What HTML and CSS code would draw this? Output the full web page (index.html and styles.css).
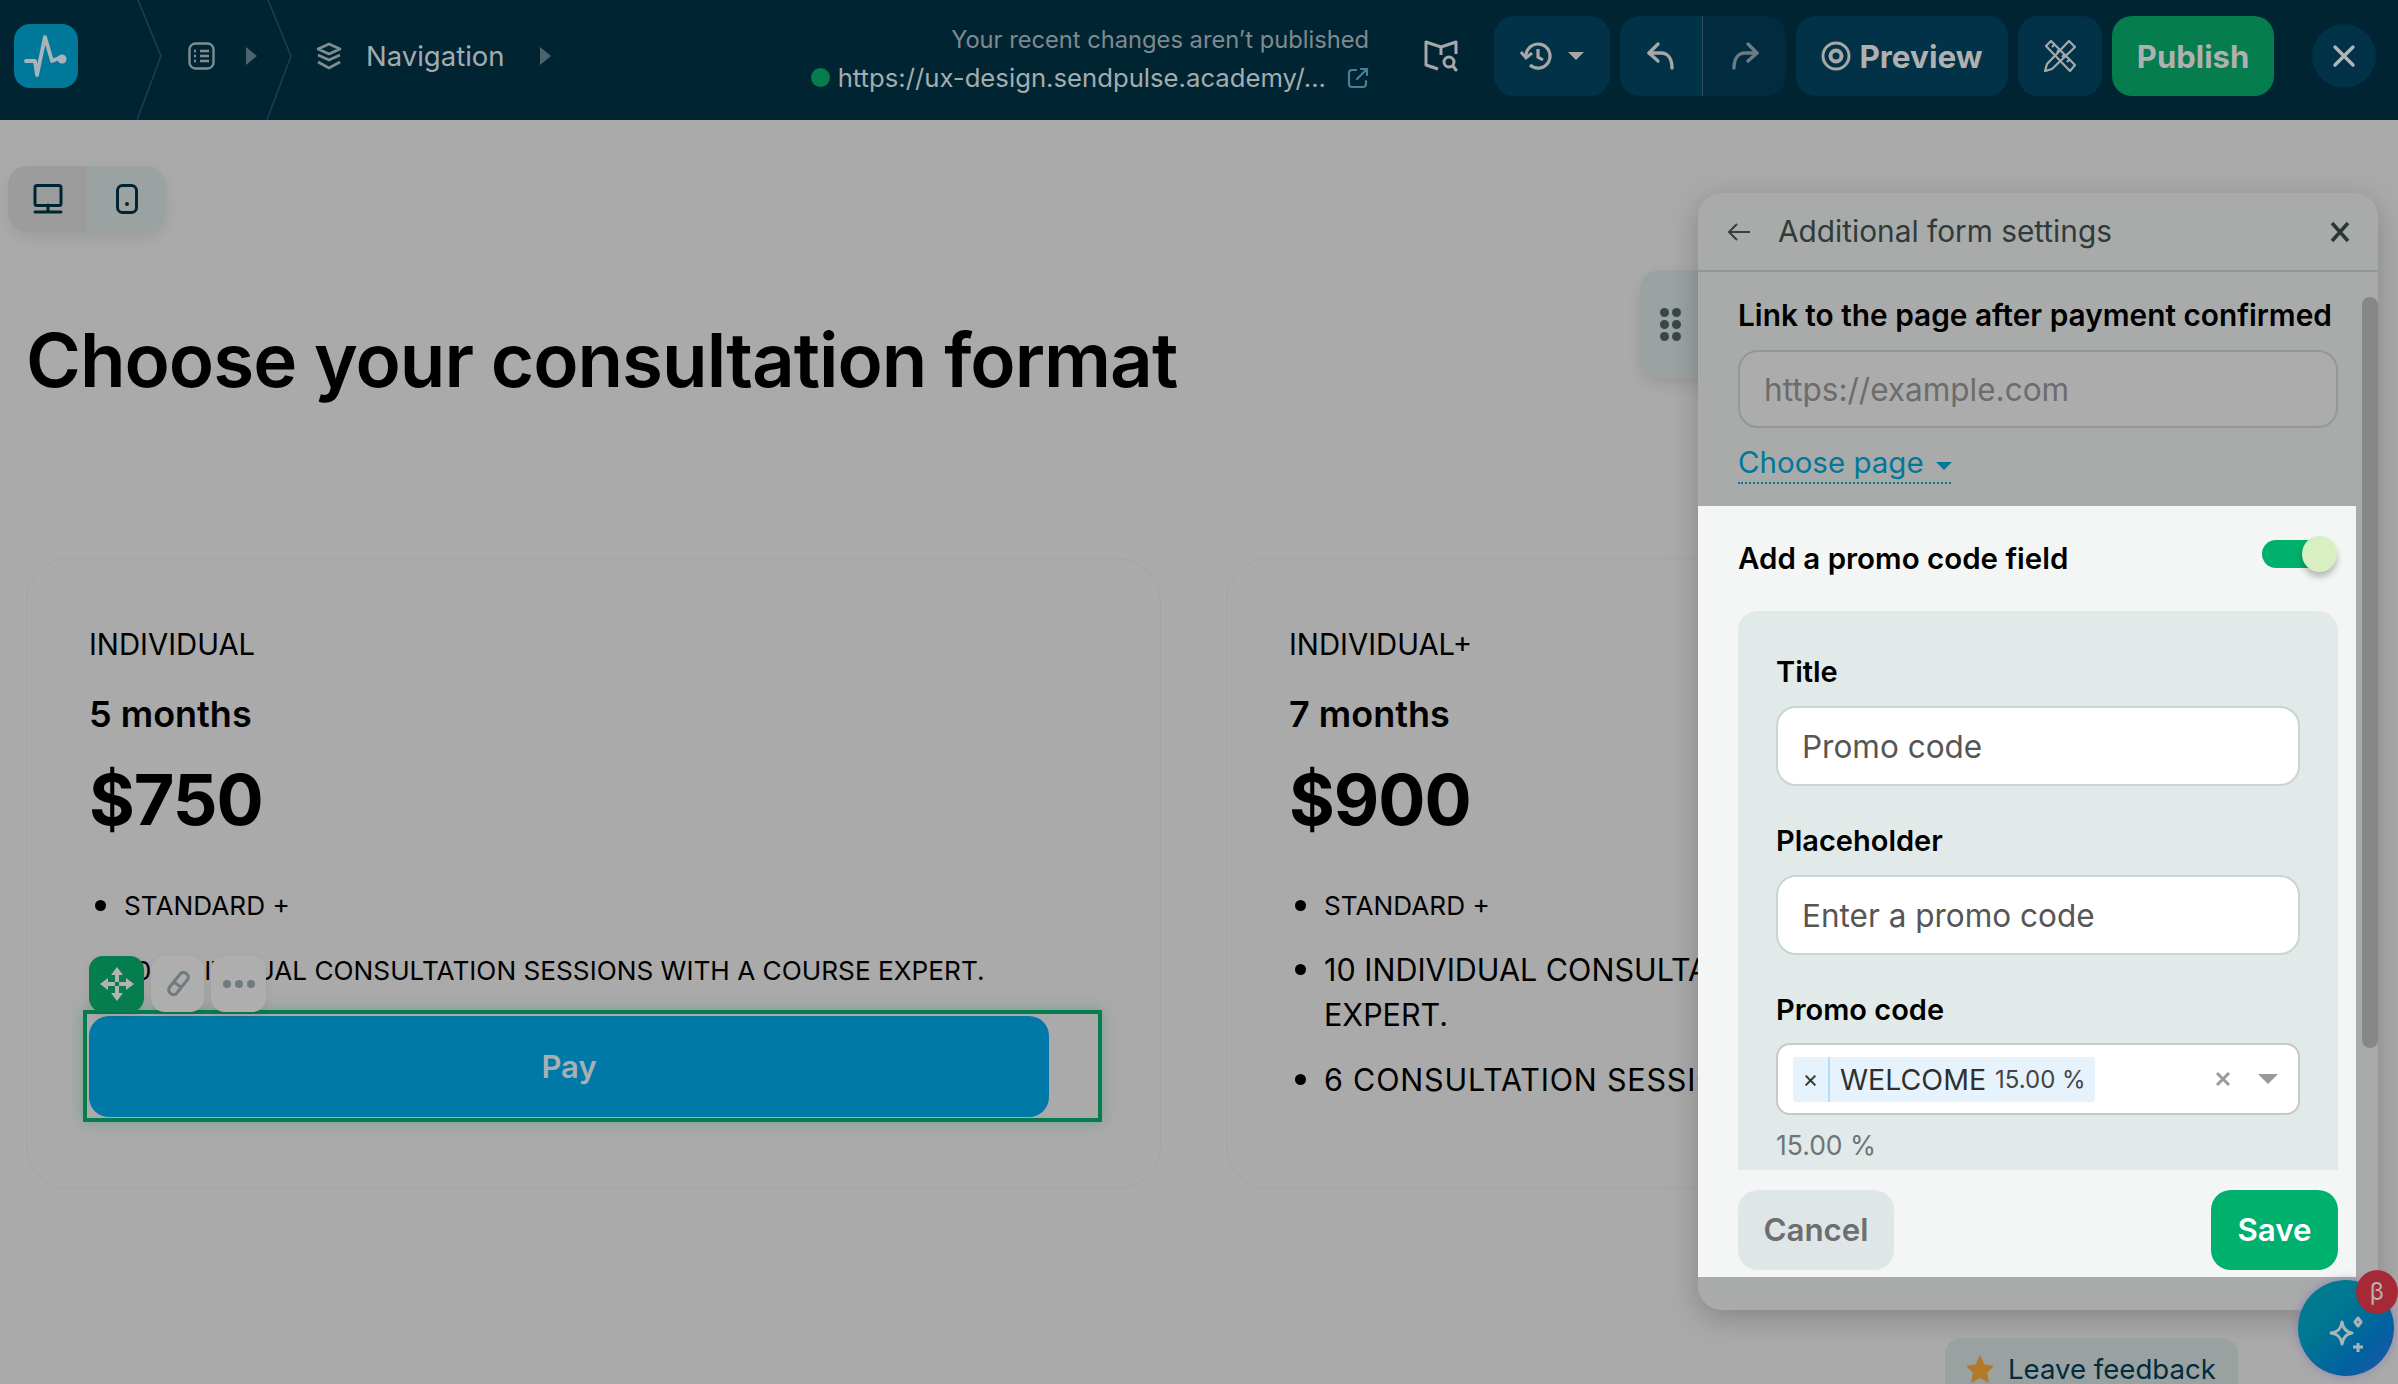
FILE: index.html
```html
<!DOCTYPE html>
<html lang="en">
<head>
  <meta charset="UTF-8">
  <title>Choose your consultation format</title>
  <link rel="stylesheet" href="styles.css">
</head>
<body>
  <!-- Top bar -->
  <header class="topbar">
    <div class="logo">
      <svg width="44" height="42" viewBox="0 0 44 42" fill="none" stroke="#a9b4b8" stroke-width="3.8" stroke-linejoin="round" stroke-linecap="round"><path d="M2 26h9l2 14 8-38 7 24 7-3"/><circle cx="38" cy="24" r="4.500" fill="#a9b4b8" stroke="none"/></svg>
    </div>
    <svg class="chevron first" width="26" height="120" viewBox="0 0 26 120" fill="none" stroke="#1b4150" stroke-width="1.5"><path d="M1 0l23 56-24 64"/></svg>
    <svg class="form-icon" width="27" height="28" viewBox="0 0 27 28" fill="none" stroke="#7f8e94" stroke-width="2.4"><rect x="1.5" y="1.5" width="24" height="25" rx="6"/><path d="M12 9h9M12 14h9M12 19h9M6 9h2M6 14h2M6 19h2"/></svg>
    <span class="crumb-arrow"></span>
    <svg class="chevron second" width="26" height="120" viewBox="0 0 26 120" fill="none" stroke="#1b4150" stroke-width="1.5"><path d="M1 0l23 56-24 64"/></svg>
    <svg class="layers-icon" width="28" height="28" viewBox="0 0 28 28" fill="none" stroke="#7f8e94" stroke-width="2.6" stroke-linejoin="round"><path d="M14 2l11 5-11 5L3 7z"/><path d="M3 13l11 5 11-5M3 20l11 6 11-6"/></svg>
    <span class="crumb-text">Navigation</span>
    <span class="crumb-arrow"></span>

    <div class="status">
      <div class="status-note">Your recent changes aren’t published</div>
      <div class="status-url">
        <span class="status-dot"></span>
        <span>https://ux-design.sendpulse.academy/...</span>
        <svg width="22" height="22" viewBox="0 0 22 22" fill="none" stroke="#4a7f97" stroke-width="2.2" stroke-linecap="round"><path d="M9 3H5a3 3 0 0 0-3 3v11a3 3 0 0 0 3 3h11a3 3 0 0 0 3-3v-3M10 12L20 2M14 2h6v6"/></svg>
      </div>
    </div>

    <svg class="map-icon" width="34" height="34" viewBox="0 0 34 34" fill="none" stroke="#a8a8a8" stroke-width="3" stroke-linejoin="round"><path d="M14 30L2 26V3l15 5 15-5v12M17 8v8M10 28H6"/><circle cx="25" cy="23" r="5"/><path d="M29 27l3 4" stroke-linecap="round"/></svg>

    <button class="bar-btn history">
      <svg width="34" height="30" viewBox="0 0 34 30" fill="none" stroke="#a8a8a8" stroke-width="3.2"><path d="M6 15a12 12 0 1 1 4 9"/><path d="M1 11l5 6 6-5" stroke-width="3"/><path d="M18 8v8l5 3"/></svg>
      <span class="caret"></span>
    </button>

    <div class="undo-group">
      <button class="bar-btn undo">
        <svg width="30" height="30" viewBox="0 0 30 30" fill="none" stroke="#a8a8a8" stroke-width="3.4" stroke-linecap="round" stroke-linejoin="round"><path d="M12 3L3 12l9 8"/><path d="M3 12h12c7 0 11 6 11 15"/></svg>
      </button>
      <button class="bar-btn redo">
        <svg width="30" height="30" viewBox="0 0 30 30" fill="none" stroke="#6b7c83" stroke-width="3.4" stroke-linecap="round" stroke-linejoin="round"><path d="M18 3l9 9-9 8"/><path d="M27 12H15C8 12 4 18 4 27"/></svg>
      </button>
    </div>

    <button class="bar-btn preview">
      <svg width="30" height="30" viewBox="0 0 30 30" fill="none" stroke="#a8a8a8"><circle cx="15" cy="15" r="13" stroke-width="3"/><circle cx="15" cy="15" r="5.500" stroke-width="4"/></svg>
      <span>Preview</span>
    </button>

    <button class="bar-btn tools">
      <svg width="32" height="32" viewBox="0 0 32 32" fill="none" stroke="#a8a8a8" stroke-width="2.2" stroke-linejoin="round"><path d="M2 6l5-5 24 24-5 6z"/><path d="M8 7l3-3M13 12l3-3M18 17l3-3M23 22l3-3"/><path d="M25 1l6 6L8 29l-7 2 2-7z"/></svg>
    </button>

    <button class="bar-btn publish">Publish</button>

    <button class="bar-close">
      <svg width="24" height="24" viewBox="0 0 24 24" fill="none" stroke="#b5b5b5" stroke-width="3.4" stroke-linecap="round"><path d="M3 3l18 18M21 3L3 21"/></svg>
    </button>
  </header>

  <!-- Page canvas -->
  <main class="canvas">
    <div class="device-switch">
      <div class="device active">
        <svg width="30" height="30" viewBox="0 0 30 30" fill="none" stroke="#012433" stroke-width="3"><rect x="2" y="1.5" width="26" height="20" rx="2"/><path d="M15 21v6M2 28h26" stroke-linecap="round"/></svg>
      </div>
      <div class="device">
        <svg width="22" height="30" viewBox="0 0 22 30" fill="none" stroke="#012433" stroke-width="3"><rect x="1.5" y="1.5" width="19" height="27" rx="5"/><circle cx="11" cy="20" r="2" fill="#012433" stroke="none"/></svg>
      </div>
    </div>

    <h1 class="page-title">Choose your consultation format</h1>

    <section class="plans">
      <article class="plan">
        <div class="plan-name">INDIVIDUAL</div>
        <div class="plan-term">5 months</div>
        <div class="plan-price">$750</div>
        <ul class="plan-list">
          <li>STANDARD +</li>
          <li>10 INDIVIDUAL CONSULTATION SESSIONS WITH A COURSE EXPERT.</li>
        </ul>
        <div class="pay-wrap">
          <div class="block-tools">
            <span class="tool tool-move">
              <svg width="36" height="36" viewBox="0 0 36 36" fill="#b3b3b3"><path d="M18 1l6 8h-4v7h-4V9h-4zM18 35l-6-8h4v-7h4v7h4zM1 18l8-6v4h7v4H9v4zM35 18l-8 6v-4h-7v-4h7v-4z"/></svg>
            </span>
            <span class="tool tool-link">
              <svg width="30" height="30" viewBox="0 0 30 30" fill="none" stroke="#6f7b7e" stroke-width="3"><path d="M6 19L18 4a5 5 0 0 1 7 6L13 25a5 5 0 0 1-7-6zM11 13l8 6"/></svg>
            </span>
            <span class="tool tool-more"><i></i><i></i><i></i></span>
          </div>
          <button class="pay-btn">Pay</button>
        </div>
      </article>

      <article class="plan plan-wide">
        <div class="plan-name">INDIVIDUAL+</div>
        <div class="plan-term">7 months</div>
        <div class="plan-price">$900</div>
        <ul class="plan-list">
          <li>STANDARD +</li>
          <li class="big">10 INDIVIDUAL CONSULTATION SESSIONS WITH A COURSE<br>EXPERT.</li>
          <li class="big">6 CONSULTATION SESSIONS</li>
        </ul>
      </article>
    </section>
  </main>

  <!-- Settings panel over the canvas -->
  <div class="panel-grip">
    <i></i><i></i><i></i><i></i><i></i><i></i>
  </div>
  <aside class="panel">
    <div class="panel-head">
      <svg width="24" height="20" viewBox="0 0 24 20" fill="none" stroke="#33403f" stroke-width="2"><path d="M23 10H2M10 2l-8 8 8 8"/></svg>
      <span class="panel-title">Additional form settings</span>
      <svg class="panel-x" width="20" height="20" viewBox="0 0 20 20" fill="none" stroke="#2b3636" stroke-width="3.6"><path d="M2 1l16 18M18 1L2 19"/></svg>
    </div>

    <div class="panel-top">
      <div class="field-label">Link to the page after payment confirmed</div>
      <div class="text-input dim">https://example.com</div>
      <a class="choose-page">Choose page <span class="caret teal"></span></a>
    </div>

    <div class="panel-focus">
      <div class="toggle-row">
        <span class="field-label">Add a promo code field</span>
        <span class="toggle"><span class="toggle-knob"></span></span>
      </div>

      <div class="promo-box">
        <div class="field-label">Title</div>
        <div class="text-input">Promo code</div>
        <div class="field-label next">Placeholder</div>
        <div class="text-input">Enter a promo code</div>
        <div class="field-label next">Promo code</div>
        <div class="select-input">
          <span class="chip">
            <span class="chip-x">×</span>
            <span class="chip-name">WELCOME</span>
            <span class="chip-value">15.00 %</span>
          </span>
          <svg class="select-clear" width="16" height="16" viewBox="0 0 16 16" fill="none" stroke="#9a9a9a" stroke-width="3"><path d="M2 2l12 12M14 2L2 14"/></svg>
          <span class="select-arrow"></span>
        </div>
        <div class="promo-note">15.00 %</div>
      </div>

      <div class="panel-foot">
        <button class="foot-btn cancel">Cancel</button>
        <button class="foot-btn save">Save</button>
      </div>
    </div>

    <div class="panel-scroll"></div>
  </aside>

  <button class="feedback">
    <svg width="30" height="30" viewBox="0 0 30 30" fill="#b57728"><path d="M15 1l4.500 9.500 9.500 1.200-7 7 2 10.300-9-5-9 5 2-10.300-7-7 9.500-1.200z"/></svg>
    <span>Leave feedback</span>
  </button>

  <div class="ai-btn">
    <svg width="36" height="40" viewBox="0 0 36 40" fill="none" stroke="#aab4bb" stroke-width="3" stroke-linejoin="round"><path d="M14 6c1 7 4 10 10 11-6 1-9 4-10 11-1-7-4-10-11-11 7-1 10-4 11-11z"/><path d="M30 2l3 4-3 4-3-4zM30 27v9M25 31h10"/></svg>
    <span class="ai-badge">β</span>
  </div>
</body>
</html>
```

FILE: styles.css
```css
* {
  box-sizing: border-box;
}

html, body {
  margin: 0;
  height: 1384px;
  overflow: hidden;
}

body {
  position: relative;
  width: 2398px;
  font-family: Inter, "Noto Sans", sans-serif;
  background-color: #aaaaaa;
  color: #000;
}

button {
  font-family: inherit;
  border: none;
  cursor: pointer;
}

/* Top bar */
.topbar {
  display: flex;
  align-items: center;
  height: 120px;
  padding: 0 22px 8px 14px;
  background-color: #012433;
}

.logo {
  display: flex;
  align-items: center;
  justify-content: center;
  width: 64px;
  height: 64px;
  border-radius: 16px;
  background-color: #00789a;
}

.chevron {
  flex: none;
  margin-top: 8px;
}

.chevron.first {
  margin-left: 59px;
}

.chevron.second {
  margin-left: 10px;
}

.form-icon {
  margin-left: 25px;
}

.layers-icon {
  margin-left: 22px;
}

.crumb-arrow {
  width: 0;
  height: 0;
  margin-left: 31px;
  border-left: 11px solid #4c646d;
  border-top: 9px solid transparent;
  border-bottom: 9px solid transparent;
}

.crumb-text {
  margin-left: 23px;
  font-size: 27.500px;
  color: #a3adaf;
}

.crumb-text + .crumb-arrow {
  margin-left: 35px;
}

.status {
  margin-left: auto;
  margin-top: 8px;
  text-align: right;
}

.status-note {
  font-size: 23.700px;
  line-height: 30px;
  color: #7f8a8e;
}

.status-url {
  display: flex;
  align-items: center;
  justify-content: flex-end;
  gap: 8px;
  margin-top: 5px;
  font-size: 25.700px;
  line-height: 36px;
  color: #a3adaf;
}

.status-url svg {
  margin-left: 13px;
}

.status-dot {
  width: 19px;
  height: 19px;
  border-radius: 50%;
  background-color: #057d4f;
}

.map-icon {
  margin-left: 55px;
}

.bar-btn {
  display: flex;
  align-items: center;
  justify-content: center;
  height: 80px;
  border-radius: 20px;
  background-color: #013247;
  color: #b0b0b0;
}

.history {
  gap: 14px;
  width: 116px;
  margin-left: 36px;
}

.caret {
  width: 0;
  height: 0;
  border-left: 8px solid transparent;
  border-right: 8px solid transparent;
  border-top: 8px solid #a8a8a8;
}

.undo-group {
  display: flex;
  margin-left: 10px;
}

.undo {
  width: 83px;
  border-radius: 20px 0 0 20px;
  border-right: 1px solid #2f5062;
}

.redo {
  width: 83px;
  border-radius: 0 20px 20px 0;
  background-color: #012c3f;
}

.preview {
  gap: 8px;
  width: 212px;
  margin-left: 10px;
  font-size: 31.500px;
  font-weight: 700;
}

.tools {
  width: 84px;
  margin-left: 10px;
}

.publish {
  width: 162px;
  margin-left: 10px;
  background-color: #057d4f;
  font-size: 31px;
  font-weight: 700;
}

.bar-close {
  display: flex;
  align-items: center;
  justify-content: center;
  width: 64px;
  height: 64px;
  margin-left: 38px;
  border-radius: 50%;
  background-color: #013247;
}

/* Canvas */
.canvas {
  padding: 46px 0 0 26px;
}

.device-switch {
  display: flex;
  width: 158px;
  height: 66px;
  margin-left: -18px;
  border-radius: 20px;
  overflow: hidden;
  background-color: #9aa2a2;
  box-shadow: 0 6px 14px rgba(0, 0, 0, 0.08);
}

.device {
  display: flex;
  align-items: center;
  justify-content: center;
  width: 79px;
}

.device.active {
  background-color: #9c9c9c;
}

.page-title {
  margin: 83px 0 0;
  font-size: 74.500px;
  line-height: 90px;
  font-weight: 600;
  letter-spacing: -1px;
  color: #000;
}

.plans {
  display: flex;
  gap: 65px;
  margin-top: 153px;
}

.plan {
  flex: none;
  width: 1135px;
  height: 631px;
  padding: 66px 0 0 62px;
  border: 1px solid #a6a4a1;
  border-radius: 44px;
}

.plan-name {
  font-size: 29.300px;
  line-height: 40px;
}

.plan-term {
  margin-top: 29px;
  font-size: 36px;
  line-height: 40px;
  font-weight: 600;
}

.plan-price {
  margin-top: 26px;
  font-size: 70px;
  line-height: 80px;
  font-weight: 700;
  letter-spacing: -1px;
}

.plan-list {
  margin: 46px 0 0;
  padding: 0 0 0 6px;
  list-style: none;
}

.plan-list li {
  display: flex;
  gap: 18px;
  margin-top: 25px;
  font-size: 26.200px;
  line-height: 40px;
}

.plan-list li:first-child {
  margin-top: 0;
}

.plan-list li::before {
  content: "";
  flex: none;
  width: 11px;
  height: 11px;
  margin-top: 14px;
  border-radius: 50%;
  background-color: #000;
}

.plan-list li.big {
  margin-top: 21px;
  font-size: 30.500px;
  line-height: 45px;
}

.plan-list li.big + li.big {
  margin-top: 20px;
  letter-spacing: 0.8px;
}

.plan-list li.big::before {
  margin-top: 17px;
}

.pay-wrap {
  position: relative;
  width: 1019px;
  height: 112px;
  margin: 19px 0 0 -6px;
  padding: 2px;
  border: 4px solid #057d4f;
  box-shadow: 0 0 14px rgba(5, 125, 79, 0.3);
}

.pay-btn {
  display: block;
  width: 960px;
  height: 101px;
  border-radius: 20px;
  background-color: #0079a9;
  color: #a9b0b3;
  font-size: 31px;
  font-weight: 600;
}

.block-tools {
  position: absolute;
  top: -58px;
  left: 2px;
  display: flex;
  gap: 7px;
}

.tool {
  display: flex;
  align-items: center;
  justify-content: center;
  gap: 4px;
  width: 55px;
  height: 56px;
  border-radius: 14px;
  background-color: #aeaeae;
  box-shadow: 0 4px 10px rgba(0, 0, 0, 0.08);
}

.tool-move {
  background-color: #057d4f;
}

.tool-link {
  width: 53px;
}

.tool-more i {
  width: 8px;
  height: 8px;
  border-radius: 50%;
  background-color: #6f7b7e;
}

/* Settings panel */
.panel {
  position: absolute;
  top: 193px;
  left: 1698px;
  width: 680px;
  height: 1117px;
  border-radius: 24px;
  background-color: #a9abaa;
  box-shadow: 0 8px 30px rgba(0, 0, 0, 0.22);
}

.panel-head {
  display: flex;
  align-items: center;
  height: 79px;
  padding: 0 28px 0 29px;
  border-bottom: 2px solid #8f9997;
}

.panel-title {
  margin: -2px 0 0 27px;
  font-size: 29.800px;
  color: #2f3b3b;
}

.panel-x {
  margin-left: auto;
}

.panel-top {
  height: 234px;
  padding: 23px 0 0 40px;
}

.field-label {
  font-size: 29.800px;
  line-height: 40px;
  font-weight: 600;
  white-space: nowrap;
}

.toggle-row .field-label {
  margin-top: -2px;
  font-size: 29.500px;
}

.text-input {
  display: flex;
  align-items: center;
  width: 524px;
  height: 80px;
  margin-top: 15px;
  padding: 0 24px;
  border: 2px solid #c9d5d4;
  border-radius: 20px;
  background-color: #fff;
  font-size: 31.500px;
  color: #565656;
}

.text-input.dim {
  width: 600px;
  height: 78px;
  border-color: #8f9997;
  background-color: #acacac;
  color: #6c6c6c;
}

.choose-page {
  display: flex;
  align-items: center;
  gap: 12px;
  width: 213px;
  height: 40px;
  margin-top: 16px;
  padding-bottom: 3px;
  border-bottom: 2px dotted #00789a;
  font-size: 29.500px;
  white-space: nowrap;
  color: #00789a;
}

.caret.teal {
  margin-top: 8px;
  border-top-color: #00789a;
}

.panel-focus {
  width: 658px;
  height: 771px;
  background-color: #f3f6f5;
}

.toggle-row {
  display: flex;
  align-items: center;
  justify-content: space-between;
  height: 105px;
  padding: 0 19px 0 40px;
}

.toggle {
  position: relative;
  width: 75px;
  height: 28px;
  margin-top: -10px;
  margin-right: 0;
  border-radius: 14px 0 0 14px;
  background: linear-gradient(90deg, #00b06d 0 64%, transparent 64%);
}

.toggle-knob {
  position: absolute;
  top: -4px;
  right: 0;
  width: 35px;
  height: 36px;
  border-radius: 50%;
  background-color: #d8efc4;
  box-shadow: 0 5px 6px rgba(0, 0, 0, 0.25);
}

.promo-box {
  width: 600px;
  height: 559px;
  margin-left: 40px;
  padding: 20px 38px 0;
  border-radius: 20px 20px 0 0;
  background-color: #e2eae9;
  overflow: hidden;
}

.promo-box .field-label {
  height: 40px;
  margin-top: 20px;
  padding-top: 1px;
  font-size: 29px;
}

.promo-box .field-label.next {
  margin-top: 34px;
}

.select-input {
  display: flex;
  align-items: center;
  width: 524px;
  height: 72px;
  margin-top: 14px;
  padding: 0 20px 0 15px;
  border: 2px solid #c8c8c8;
  border-radius: 14px;
  background-color: #fff;
}

.chip {
  display: flex;
  align-items: center;
  height: 45px;
  border-radius: 4px;
  background-color: #e6f3fd;
}

.chip-x {
  width: 37px;
  height: 45px;
  line-height: 43px;
  text-align: center;
  font-size: 24px;
  border-right: 2px solid #b5dcf7;
  color: #333;
}

.chip-name {
  margin-left: 10px;
  font-size: 28.500px;
  color: #2f2f2f;
}

.chip-value {
  margin: 0 9px;
  font-size: 24px;
  color: #444;
}

.select-clear {
  margin-left: auto;
}

.select-arrow {
  width: 0;
  height: 0;
  margin-left: 27px;
  border-left: 10px solid transparent;
  border-right: 10px solid transparent;
  border-top: 10px solid #9a9a9a;
}

.promo-note {
  margin-top: 12px;
  font-size: 26.500px;
  line-height: 36px;
  color: #6d7478;
}

.panel-foot {
  display: flex;
  justify-content: space-between;
  height: 107px;
  padding: 20px 18px 7px 40px;
}

.foot-btn {
  height: 80px;
  border-radius: 20px;
  font-size: 31.300px;
  font-weight: 600;
}

.cancel {
  width: 156px;
  background-color: #dfe6e7;
  color: #6e6e6e;
}

.save {
  width: 127px;
  background-color: #00b06d;
  color: #fff;
}

.panel-scroll {
  position: absolute;
  top: 104px;
  right: 0;
  width: 16px;
  height: 751px;
  border-radius: 8px;
  background-color: #868887;
}

.panel-grip {
  position: absolute;
  top: 270px;
  left: 1640px;
  display: grid;
  grid-template-columns: 9px 9px;
  grid-auto-rows: 9px;
  gap: 3px;
  align-content: start;
  width: 70px;
  height: 108px;
  padding: 38px 0 0 20px;
  border-radius: 20px 0 0 20px;
  background-color: #9aa2a2;
  box-shadow: 0 6px 14px rgba(0, 0, 0, 0.1);
}

.panel-grip i {
  width: 9px;
  height: 9px;
  border-radius: 50%;
  background-color: #3a4646;
}

/* Floating buttons */
.feedback {
  position: absolute;
  top: 1338px;
  left: 1945px;
  display: flex;
  align-items: center;
  gap: 13px;
  width: 293px;
  height: 62px;
  padding: 0 20px;
  border-radius: 16px;
  background-color: #99a1a1;
  color: #012c3f;
  font-size: 27.600px;
  white-space: nowrap;
}

.feedback svg {
  flex: none;
}

.ai-btn {
  position: absolute;
  top: 1280px;
  left: 2298px;
  display: flex;
  align-items: center;
  justify-content: center;
  width: 96px;
  height: 96px;
  padding-top: 16px;
  border-radius: 50%;
  background: linear-gradient(135deg, #007a90 30%, #0062a0 70%, #2a52a8);
  box-shadow: 0 0 10px rgba(110, 90, 200, 0.5);
}

.ai-badge {
  position: absolute;
  top: -10px;
  left: 58px;
  width: 42px;
  height: 44px;
  border-radius: 50%;
  background-color: #a52a35;
  color: #b8b0b0;
  font-size: 24px;
  line-height: 44px;
  text-align: center;
}
```
